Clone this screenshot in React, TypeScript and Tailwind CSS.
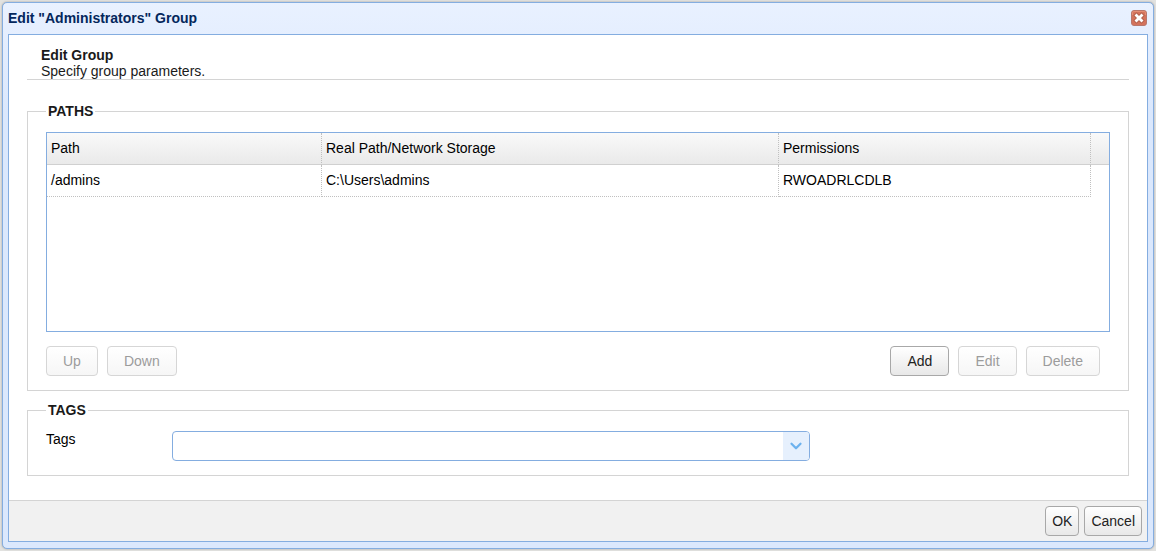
import { FiChevronDown } from "react-icons/fi";

const rows = [
  { path: "/admins", real: "C:\\Users\\admins", permissions: "RWOADRLCDLB" },
];

const button =
  "h-[30px] rounded border border-[#a8a8a8] bg-linear-to-b from-white to-[#e8e8e8] text-[#222] disabled:border-[#d6d6d6] disabled:to-[#f6f6f6] disabled:text-[#9c9c9c]";
const cell =
  "h-8 border-r border-b border-dotted border-[#c0c0c0] px-1 pb-0.5 text-left font-normal";
const legend = "px-0.5 leading-[15px] font-bold text-[#1a1a1a]";

const CloseIcon = () => (
  <svg width="16" height="16" viewBox="0 0 16 16" aria-hidden="true">
    <rect x="0.5" y="0.5" width="15" height="15" rx="2.5" fill="#d4735c" stroke="#b8776c" />
    <path d="M1.5 5V3Q1.5 1.5 3 1.5H13Q14.5 1.5 14.5 3V5" fill="none" stroke="#e58d74" />
    <path d="M5.5 5.5L10.5 10.5M10.5 5.5L5.5 10.5" stroke="#b3604c" strokeWidth="4.6" strokeLinecap="square" />
    <path d="M5.5 5.5L10.5 10.5M10.5 5.5L5.5 10.5" stroke="#fff" strokeWidth="2.8" strokeLinecap="square" />
  </svg>
);

const PathsTable = () => (
  <div className="h-[200px] border border-[#84ade0] bg-white">
    <table className="w-full table-fixed border-separate border-spacing-0">
      <colgroup>
        <col className="w-[275px]" />
        <col />
        <col className="w-[312px]" />
        <col className="w-[18px]" />
      </colgroup>
      <thead>
        <tr className="bg-linear-to-b from-[#f9f9f9] to-[#e9e9e9]">
          {["Path", "Real Path/Network Storage", "Permissions"].map((name) => (
            <th key={name} scope="col" className={`${cell} border-b-[#d0d0d0] [border-bottom-style:solid]`}>
              {name}
            </th>
          ))}
          <td className="border-b border-[#d0d0d0]"></td>
        </tr>
      </thead>
      <tbody>
        {rows.map((row) => (
          <tr key={row.path}>
            <td className={cell}>{row.path}</td>
            <td className={cell}>{row.real}</td>
            <td className={cell}>{row.permissions}</td>
            <td></td>
          </tr>
        ))}
      </tbody>
    </table>
  </div>
);

export default function App() {
  return (
    <div className="bg-[#e2e2e0] p-0.5 font-['Liberation_Sans',Arial,sans-serif] text-sm/4 text-black">
      <div role="dialog" aria-labelledby="title" className="rounded-[5px] border border-[#84ade0] bg-[#dbe8fd] bg-linear-to-b from-[#e9f1ff] to-[#dbe8fd] to-20% px-[5px] pb-1.5 shadow-[0_0_2px_#999]">
        <header className="flex h-[31px] items-center justify-between pr-px pb-px">
          <h1 id="title" className="font-bold text-[#04275c]">Edit "Administrators" Group</h1>
          <button type="button" aria-label="Close">
            <CloseIcon />
          </button>
        </header>

        <div className="border border-[#84ade0] bg-white">
          <main className="px-[18px] pt-3 pb-6">
            <div className="border-b border-[#d4d4d4] pl-3.5">
              <h2 className="font-bold text-[#1a1a1a]">Edit Group</h2>
              <p className="text-[#1a1a1a]">Specify group parameters.</p>
            </div>

            <fieldset className="mt-6 border border-[#d4d4d4] px-[18px] pb-3.5">
              <legend className={legend}>PATHS</legend>
              <div className="pt-[13px]">
                <PathsTable />
              </div>
              <div className="mt-3.5 flex justify-between pr-2.5">
                <div className="flex gap-[9px]">
                  <button type="button" disabled className={`${button} px-4`}>Up</button>
                  <button type="button" disabled className={`${button} px-4`}>Down</button>
                </div>
                <div className="flex gap-[9px]">
                  <button type="button" className={`${button} px-4`}>Add</button>
                  <button type="button" disabled className={`${button} px-4`}>Edit</button>
                  <button type="button" disabled className={`${button} px-4`}>Delete</button>
                </div>
              </div>
            </fieldset>

            <fieldset className="mt-3 border border-[#d4d4d4] px-[18px] pb-3.5">
              <legend className={legend}>TAGS</legend>
              <div className="flex pt-[13px]">
                <label htmlFor="tags" className="w-[126px]">Tags</label>
                <div className="relative max-w-[638px] grow">
                  <select id="tags" className="block h-[30px] w-full appearance-none rounded border border-[#84ade0] bg-white px-2">
                    <option value=""></option>
                  </select>
                  <span className="pointer-events-none absolute inset-y-px right-px flex w-[26px] items-center justify-center rounded-r-[3px] bg-[#e6f0fd] text-[#6cb2ee]">
                    <FiChevronDown size={18} strokeWidth={3} />
                  </span>
                </div>
              </div>
            </fieldset>
          </main>

          <footer className="flex justify-end gap-[5px] border-t border-[#d4d4d4] bg-[#f1f1f1] p-[5px]">
            <button type="button" className={`${button} px-1.5`}>OK</button>
            <button type="button" className={`${button} px-1.5`}>Cancel</button>
          </footer>
        </div>
      </div>
    </div>
  );
}
